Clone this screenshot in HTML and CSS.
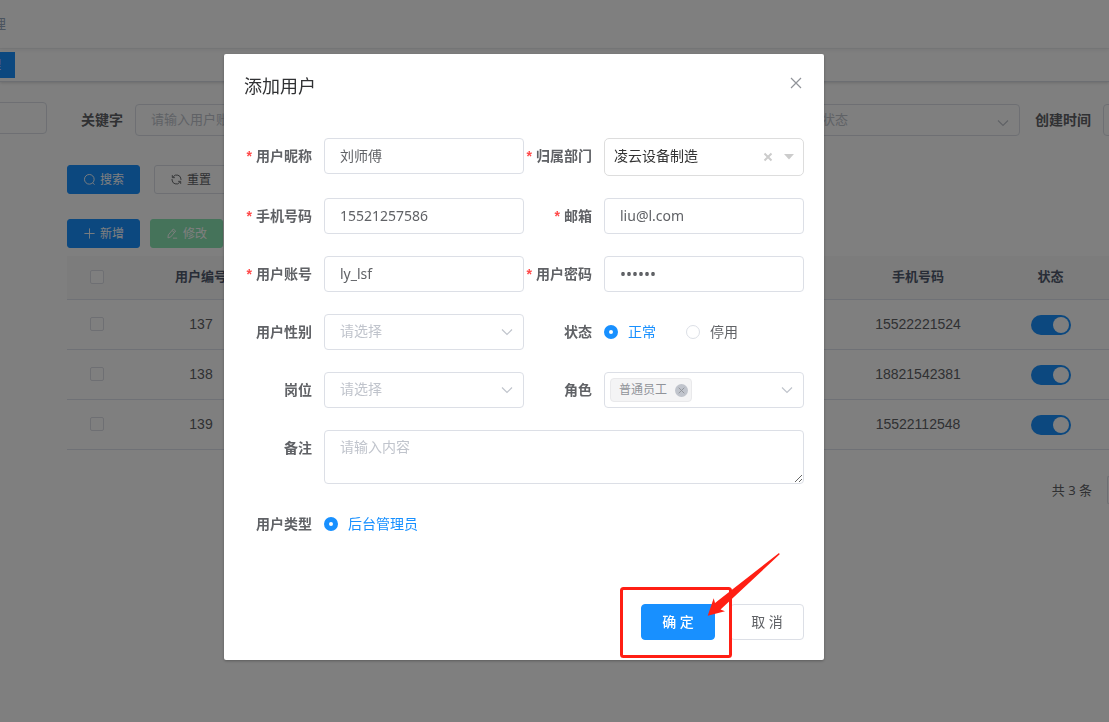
FILE: index.html
```html
<!DOCTYPE html>
<html lang="zh-CN">
<head>
<meta charset="utf-8">
<title>添加用户</title>
<link rel="stylesheet" href="styles.css">
</head>
<body>
<div class="page">
  <header class="navbar"><span class="crumb">理</span></header>
  <nav class="tags"><a class="tag-link" href="#"><span>理</span></a></nav>
  <div class="content">
    <aside class="side"><input class="side-input" type="text" aria-label="部门"></aside>
    <main class="main">
      <form class="search">
        <div class="search-item">
          <label for="kw">关键字</label>
          <input id="kw" class="ctl search-ctl" type="text" placeholder="请输入用户账号">
        </div>
        <div class="search-item search-status">
          <div class="select-wrap">
            <select class="ctl search-ctl" aria-label="用户状态"><option>用户状态</option></select>
            <svg class="chev chev-low" viewBox="0 0 14 14"><path d="M2 4.5l5 5 5-5"/></svg>
          </div>
        </div>
        <div class="search-item search-time">
          <label for="ct">创建时间</label>
          <input id="ct" class="ctl search-ctl" type="text">
        </div>
      </form>
      <div class="bar bar-search">
        <button class="btn primary" type="button"><svg viewBox="0 0 14 14"><circle cx="6.8" cy="6.8" r="5.2"/><path d="M10.4 10.6l2 2"/></svg>搜索</button>
        <button class="btn plain" type="button"><svg viewBox="0 0 14 14"><path d="M11.8 7.500V6.500a4.600 4.600 0 0 0-8.300-2.500M2.500 2.300v2.700h2.700M2.200 6.500v1a4.600 4.600 0 0 0 8.300 2.500M11.500 11.700V9H8.800"/></svg>重置</button>
      </div>
      <div class="bar bar-tools">
        <button class="btn primary" type="button"><svg viewBox="0 0 14 14"><path d="M7 1.500v11M1.500 7h11"/></svg>新增</button>
        <button class="btn success" type="button"><svg viewBox="0 0 14 14"><path d="M2.500 8.500l5.300-6.300 2.600 2.100-5.300 6.400-3 1zM6.500 3.800l2.600 2.100M7.500 12h4.500"/></svg>修改</button>
      </div>
      <table class="table">
        <colgroup><col class="c-check"><col class="c-id"><col><col class="c-phone"><col class="c-status"></colgroup>
        <thead>
          <tr><th><input type="checkbox" class="check" aria-label="全选"></th><th>用户编号</th><th></th><th>手机号码</th><th class="status">状态</th></tr>
        </thead>
        <tbody>
          <tr><td><input type="checkbox" class="check" aria-label="137"></td><td>137</td><td></td><td>15522221524</td><td class="status"><input type="checkbox" class="switch" aria-label="状态 137" checked></td></tr>
          <tr><td><input type="checkbox" class="check" aria-label="138"></td><td>138</td><td></td><td>18821542381</td><td class="status"><input type="checkbox" class="switch" aria-label="状态 138" checked></td></tr>
          <tr><td><input type="checkbox" class="check" aria-label="139"></td><td>139</td><td></td><td>15522112548</td><td class="status"><input type="checkbox" class="switch" aria-label="状态 139" checked></td></tr>
        </tbody>
      </table>
      <div class="pager"><span>共 3 条</span><span class="pager-size"></span></div>
    </main>
  </div>
</div>

<div class="overlay">
  <section class="dialog" role="dialog" aria-labelledby="dlg-title">
    <header class="dialog-head">
      <h1 id="dlg-title">添加用户</h1>
      <button class="close" type="button" aria-label="关闭"><svg viewBox="0 0 16 16"><path d="M3 3l10 10M13 3L3 13"/></svg></button>
    </header>
    <form class="form">
      <div class="field"><label class="lab req" for="nick">用户昵称</label><input id="nick" class="ctl" type="text" value="刘师傅"></div>
      <div class="field"><label class="lab req" for="dept">归属部门</label>
        <div class="select-wrap">
          <select id="dept" class="ctl tree"><option>凌云设备制造</option></select>
          <span class="tree-icons">
            <svg class="tree-x" viewBox="0 0 10 10"><path d="M1.500 1.500l7 7M8.500 1.500l-7 7"/></svg>
            <svg class="tree-caret" viewBox="0 0 10 6"><path d="M0 0h10L5 5.500z"/></svg>
          </span>
        </div>
      </div>
      <div class="field"><label class="lab req" for="phone">手机号码</label><input id="phone" class="ctl" type="text" value="15521257586"></div>
      <div class="field"><label class="lab req" for="mail">邮箱</label><input id="mail" class="ctl" type="text" value="liu@l.com"></div>
      <div class="field"><label class="lab req" for="acct">用户账号</label><input id="acct" class="ctl" type="text" value="ly_lsf"></div>
      <div class="field"><label class="lab req" for="pwd">用户密码</label><input id="pwd" class="ctl" type="password" value="123456"></div>
      <div class="field"><label class="lab" for="sex">用户性别</label>
        <div class="select-wrap"><select id="sex" class="ctl empty"><option>请选择</option></select><svg class="chev" viewBox="0 0 14 14"><path d="M2 4.500l5 5 5-5"/></svg></div>
      </div>
      <div class="field"><span class="lab" id="st">状态</span>
        <div class="radios" role="radiogroup" aria-labelledby="st">
          <label class="radio"><input type="radio" name="status" checked><span>正常</span></label>
          <label class="radio"><input type="radio" name="status"><span>停用</span></label>
        </div>
      </div>
      <div class="field"><label class="lab" for="post">岗位</label>
        <div class="select-wrap"><select id="post" class="ctl empty"><option>请选择</option></select><svg class="chev" viewBox="0 0 14 14"><path d="M2 4.500l5 5 5-5"/></svg></div>
      </div>
      <div class="field"><span class="lab" id="role">角色</span>
        <div class="select-wrap">
          <div class="ctl multi" role="combobox" aria-labelledby="role" aria-expanded="false" tabindex="0">
            <span class="chip">普通员工<button type="button" aria-label="移除"><svg viewBox="0 0 14 14"><path d="M4 4l6 6M10 4l-6 6"/></svg></button></span>
          </div>
          <svg class="chev" viewBox="0 0 14 14"><path d="M2 4.500l5 5 5-5"/></svg>
        </div>
      </div>
      <div class="field wide"><label class="lab" for="note">备注</label><textarea id="note" class="ctl area" placeholder="请输入内容"></textarea></div>
      <div class="field wide"><span class="lab" id="ut">用户类型</span>
        <div class="radios" role="radiogroup" aria-labelledby="ut">
          <label class="radio"><input type="radio" name="utype" checked><span>后台管理员</span></label>
        </div>
      </div>
    </form>
    <footer class="dialog-foot">
      <button class="act ok" type="button">确 定</button>
      <button class="act" type="button">取 消</button>
    </footer>
    <svg class="marker" viewBox="0 0 164 108" aria-hidden="true">
      <rect x="1.500" y="38.500" width="109" height="68" rx="2"/>
      <path d="M87.700 65.700L93.700 48.300 95 53 159 3l.7 1.300L100.500 59.500 105 61.300z"/>
    </svg>
  </section>
</div>
</body>
</html>
```
FILE: styles.css
```css
* { box-sizing: border-box; }

body {
  margin: 0;
  height: 100vh;
  overflow: hidden;
  background: #fff;
  color: #606266;
  font: 14px/20px "Noto Sans", "Noto Sans CJK SC", sans-serif;
}

button, input, select, textarea {
  margin: 0;
  font: inherit;
  color: inherit;
}

svg {
  flex: none;
  fill: none;
  stroke: currentColor;
}

/* Page behind the dialog */
.page {
  height: 100%;
  overflow: hidden;
}

.navbar {
  height: 49px;
  display: flex;
  align-items: center;
  border-bottom: 1px solid #f0f1f3;
  box-shadow: 0 1px 4px rgba(0, 21, 41, 0.08);
  color: #97a8be;
}

.crumb { margin-left: -8px; }

.tags {
  height: 33px;
  padding-top: 3px;
  border-bottom: 1px solid #d8dce5;
  box-shadow: 0 1px 3px rgba(0, 0, 0, 0.16);
}

.tag-link {
  display: block;
  width: 15px;
  height: 26px;
  background: #1890ff;
  color: #fff;
  font-size: 12px;
  line-height: 26px;
  text-decoration: none;
}

.tag-link span { margin-left: -11px; }

.content {
  display: flex;
  gap: 20px;
  padding-top: 20px;
}

.side {
  flex: none;
  width: 47px;
  display: flex;
  align-items: flex-start;
  justify-content: flex-end;
}

.side-input {
  width: 180px;
  height: 32px;
  flex: none;
  border: 1px solid #dcdfe6;
  border-radius: 4px;
  background: #fff;
}

.main {
  flex: 1;
  min-width: 0;
}

.search {
  display: flex;
  padding-top: 2px;
}

.search-item {
  display: flex;
  align-items: center;
}

.search-item label {
  flex: none;
  width: 68px;
  padding-right: 12px;
  font-weight: bold;
  text-align: right;
}

.search-item .search-ctl {
  width: 240px;
  height: 32px;
  flex: none;
  font-size: 13px;
}

.search-status { margin-left: auto; color: #c0c4cc; }
.search-status .select-wrap { flex: none; width: 240px; }

.search-time { width: 89px; }
.search-time label { width: 83px; }

.bar {
  display: flex;
  gap: 10px;
}

.bar-search { gap: 14px; padding-top: 29px; }
.bar-tools { padding: 25px 0 8px; }

.btn {
  width: 73px;
  height: 29px;
  display: flex;
  align-items: center;
  justify-content: center;
  gap: 4px;
  padding: 0;
  border: 1px solid #1890ff;
  border-radius: 3px;
  background: #1890ff;
  color: #fff;
  font-size: 12px;
}

.btn svg { width: 13px; height: 13px; }
.btn.plain { border-color: #dcdfe6; background: #fff; color: #606266; }
.btn.success { border-color: #8ae6b5; background: #8ae6b5; }

.table {
  width: 100%;
  table-layout: fixed;
  border-collapse: separate;
  border-spacing: 0;
  font-family: "Liberation Sans", "Noto Sans CJK SC", sans-serif;
  text-align: center;
}

.c-check { width: 60px; }
.c-id { width: 148px; }
.c-phone { width: 132px; }
.c-status { width: 125px; }

.table th, .table td {
  height: 50px;
  padding: 0 0 2px;
  border-bottom: 1px solid #dfe3ec;
  vertical-align: middle;
}

.table th {
  height: 44px;
  background: #f8f8f9;
  color: #515a6e;
  font-size: 13px;
}

.table .status { padding-left: 8px; }
.table td.status { padding-bottom: 0; }

.check {
  appearance: none;
  display: block;
  width: 14px;
  height: 14px;
  margin: 0 auto;
  border: 1px solid #dcdfe6;
  border-radius: 2px;
  background: #fff;
}

.switch {
  appearance: none;
  display: block;
  width: 40px;
  height: 20px;
  margin: 0 auto;
  padding: 2px;
  border-radius: 10px;
  background: #1890ff;
}

.switch::before {
  content: "";
  display: block;
  width: 16px;
  height: 16px;
  margin-left: auto;
  border-radius: 50%;
  background: #fff;
}

.pager {
  display: flex;
  align-items: center;
  justify-content: flex-end;
  gap: 15px;
  padding-top: 26px;
  font-size: 13px;
}

.pager-size {
  width: 2px;
  height: 28px;
  border: 1px solid #dcdfe6;
  border-right: 0;
  border-radius: 3px 0 0 3px;
}

/* Dialog */
.overlay {
  position: fixed;
  inset: 0;
  display: flex;
  align-items: flex-start;
  justify-content: center;
  padding: 54px 61px 0 0;
  background: rgba(0, 0, 0, 0.5);
}

.dialog {
  position: relative;
  width: 600px;
  border-radius: 2px;
  background: #fff;
  box-shadow: 0 1px 3px rgba(0, 0, 0, 0.3);
}

.dialog-head {
  display: flex;
  align-items: center;
  justify-content: space-between;
  padding: 20px 20px 10px;
}

.dialog-head h1 {
  margin: 0;
  color: #303133;
  font-size: 18px;
  font-weight: normal;
  line-height: 24px;
}

.close {
  display: flex;
  padding: 0 0 6px;
  border: 0;
  background: none;
  color: #909399;
}

.close svg { width: 16px; height: 16px; stroke-width: 1.2; }

.form {
  display: grid;
  grid-template-columns: 1fr 1fr;
  row-gap: 22px;
  padding: 30px 20px 52px;
}

.field {
  display: flex;
  align-items: flex-start;
}

.wide { grid-column: 1 / -1; }

.lab {
  flex: none;
  width: 80px;
  padding-right: 12px;
  font-weight: bold;
  line-height: 36px;
  text-align: right;
  white-space: nowrap;
}

.req::before {
  content: "*";
  margin-right: 4px;
  color: #ff4949;
  font-family: "Liberation Sans", sans-serif;
}

.ctl {
  flex: 1;
  width: 100%;
  min-width: 0;
  height: 36px;
  padding: 0 15px 2px;
  border: 1px solid #dcdfe6;
  border-radius: 4px;
  outline: 0;
  background: #fff;
}

.ctl::placeholder { color: #c0c4cc; opacity: 1; }

.ctl[type="password"] { padding-bottom: 0; font-size: 16px; }

select.ctl { appearance: none; }
select.empty { color: #c0c4cc; }

select.tree {
  height: 38px;
  padding: 0 48px 2px 9px;
  border-color: #ddd;
  border-radius: 5px;
  color: #333;
}

.select-wrap {
  position: relative;
  flex: 1;
  min-width: 0;
  display: flex;
}

.chev {
  position: absolute;
  top: 11px;
  right: 10px;
  width: 14px;
  height: 14px;
  color: #c0c4cc;
  stroke-width: 1.2;
  pointer-events: none;
}

.chev-low { top: 12px; }

.tree-icons {
  position: absolute;
  top: 0;
  right: 10px;
  height: 38px;
  display: flex;
  align-items: center;
  gap: 11px;
  color: #ccc;
  pointer-events: none;
}

.tree-x { width: 10px; height: 10px; stroke-width: 2; }
.tree-caret { width: 10px; height: 6px; fill: #ccc; stroke: none; }

.multi {
  display: flex;
  align-items: center;
  padding: 0 5px;
}

.chip {
  display: flex;
  align-items: center;
  gap: 8px;
  height: 24px;
  padding: 0 3px 0 8px;
  border: 1px solid #e9e9eb;
  border-radius: 4px;
  background: #f4f4f5;
  color: #909399;
  font-size: 12px;
}

.chip button {
  display: flex;
  padding: 0;
  border: 0;
  border-radius: 50%;
  background: #c0c4cc;
}

.chip svg { width: 13px; height: 13px; }

.radios {
  display: flex;
  gap: 30px;
  height: 36px;
}

.radio {
  display: flex;
  align-items: center;
  gap: 10px;
}

.radio input {
  appearance: none;
  width: 14px;
  height: 14px;
  border: 1px solid #dcdfe6;
  border-radius: 50%;
  background: #fff;
}

.radio input:checked { border: 5px solid #1890ff; }
.radio input:checked + span { color: #1890ff; }

.area {
  height: 54px;
  padding: 5px 15px;
  line-height: 21px;
  resize: vertical;
}

.dialog-foot {
  display: flex;
  justify-content: flex-end;
  gap: 15px;
  padding: 10px 20px 20px;
}

.act {
  width: 74px;
  height: 36px;
  padding: 0;
  border: 1px solid #dcdfe6;
  border-radius: 4px;
  background: #fff;
}

.act.ok {
  border-color: #1890ff;
  background: #1890ff;
  color: #fff;
  font-weight: 500;
}

.marker {
  position: absolute;
  right: 40px;
  bottom: 2px;
  width: 164px;
  height: 108px;
  pointer-events: none;
}

.marker rect { stroke: #ff1f14; stroke-width: 3; }
.marker path { fill: #ff1f14; stroke: none; }
```
